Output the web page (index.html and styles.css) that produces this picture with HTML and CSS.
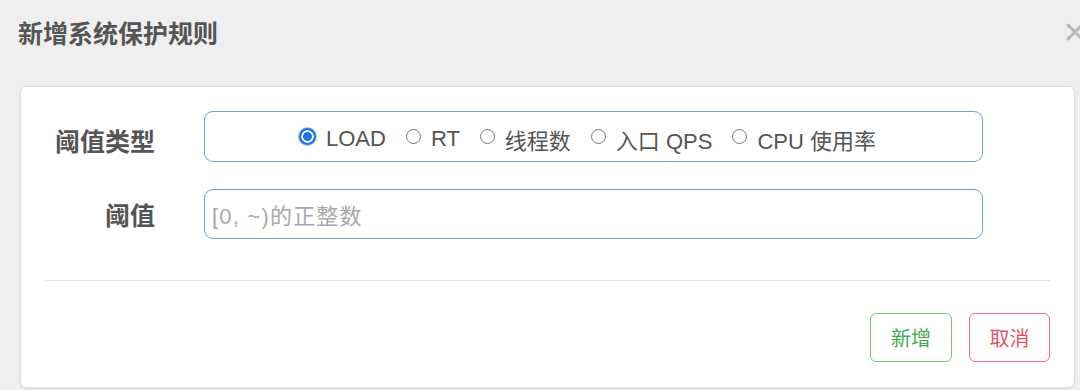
FILE: index.html
```html
<!DOCTYPE html>
<html lang="zh-CN">
<head>
  <meta charset="UTF-8" />
  <meta name="viewport" content="width=device-width, initial-scale=1.0"/>
  <title>新增系统保护规则</title>
  <link rel="stylesheet" href="styles.css">
</head>
<body>
  <header class="modal-header">
    <h1>新增系统保护规则</h1>
    <svg class="close" width="18" height="18" viewBox="0 0 18 18">
      <path d="M2 2 L16 16 M16 2 L2 16" stroke="#b9b9b9" stroke-width="3" stroke-linecap="round"/>
    </svg>
  </header>

  <section class="panel">
    <div class="form">
      <label class="label label-top">阈值类型</label>
      <div class="field radios">
        <span class="option"><span class="radio checked"></span>LOAD</span>
        <span class="option"><span class="radio"></span>RT</span>
        <span class="option"><span class="radio"></span>线程数</span>
        <span class="option"><span class="radio"></span>入口 QPS</span>
        <span class="option"><span class="radio"></span>CPU 使用率</span>
      </div>

      <label class="label">阈值</label>
      <div class="field input">
        <span class="placeholder">[0, ~)的正整数</span>
      </div>
    </div>

    <hr class="divider">

    <div class="actions">
      <button class="btn btn-ok">新增</button>
      <button class="btn btn-cancel">取消</button>
    </div>
  </section>
</body>
</html>
```

FILE: styles.css
```css
* {
  margin: 0;
  padding: 0;
  box-sizing: border-box;
}

body {
  width: 1080px;
  height: 390px;
  overflow: hidden;
  background-color: #efefef;
  font-family: 'Liberation Sans', 'Noto Sans CJK SC', sans-serif;
  color: #555;
}

.modal-header {
  height: 86px;
  display: flex;
  justify-content: space-between;
  align-items: flex-start;
  padding: 18px 0 0 18px;
}

.modal-header h1 {
  font-size: 25px;
  line-height: 32px;
  font-weight: 700;
  color: #555;
}

.close {
  margin-top: 5px;
  margin-right: -4px;
  flex-shrink: 0;
}

.panel {
  width: 1055px;
  height: 302px;
  margin-left: 20px;
  background-color: #fff;
  border: 1px solid #dedede;
  border-radius: 6px;
  box-shadow: 0 1px 2px rgba(0, 0, 0, 0.08);
  padding-top: 24px;
}

.form {
  display: grid;
  grid-template-columns: 134px 779px;
  column-gap: 49px;
  row-gap: 27px;
  align-items: center;
}

.label {
  text-align: right;
  font-size: 25px;
  font-weight: 700;
  color: #555;
}

.label-top {
  padding-top: 6px;
}

.field {
  border: 1px solid #6ca2da;
  border-radius: 9px;
  height: 51px;
  font-size: 22px;
  display: flex;
  align-items: center;
}

.field.input {
  height: 50px;
  padding-left: 7px;
}

.placeholder {
  color: #a8a8a8;
  font-size: 22px;
  letter-spacing: 1.2px;
}

.radios {
  justify-content: center;
  gap: 20px;
  padding: 5px 12px 0 0;
  color: #555;
}

.option {
  display: flex;
  align-items: center;
  gap: 10px;
}

.radio {
  width: 15px;
  height: 15px;
  border: 1px solid #777;
  border-radius: 50%;
  margin-top: -6px;
}

.radio.checked {
  width: 17px;
  height: 17px;
  border: 2px solid #1a73e8;
  background-color: #1a73e8;
  box-shadow: inset 0 0 0 2px #fff, 0 0 0 1px #a7c8f2;
}

.divider {
  border: none;
  border-top: 1px solid #e3e3e3;
  margin: 41px 24px 0 23px;
}

.actions {
  display: flex;
  justify-content: flex-end;
  gap: 17px;
  padding-right: 24px;
  margin-top: 32px;
}

.btn {
  height: 49px;
  width: 82px;
  background-color: #fff;
  border-radius: 6px;
  font-family: 'Liberation Sans', 'Noto Sans CJK SC', sans-serif;
  font-size: 20px;
}

.btn-ok {
  border: 1px solid #6ccb7c;
  color: #43a853;
}

.btn-cancel {
  width: 81px;
  border: 1px solid #eb6f79;
  color: #e2545f;
}
```
